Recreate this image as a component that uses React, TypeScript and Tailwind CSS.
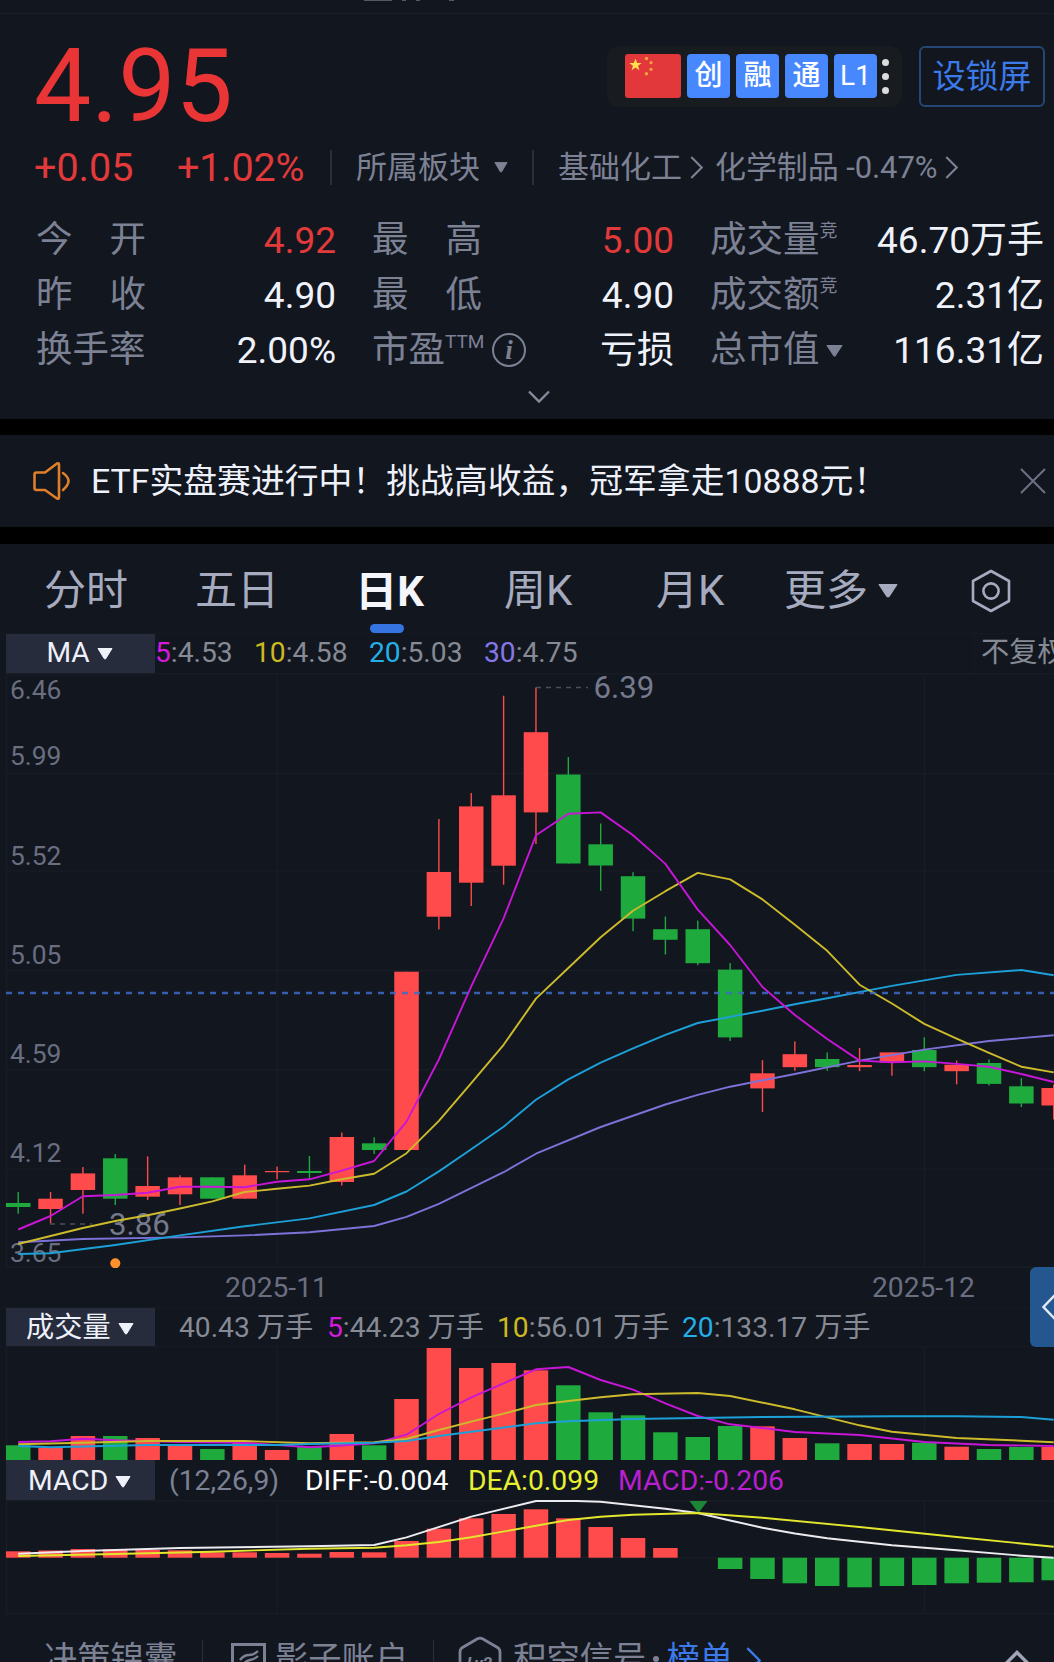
import React from 'react';

const RED = '#ff4b4b';
const GREEN = '#1eaa3c';
const STEP = 32.36;
const BAR = 24.5;

const cx = (i: number) => 18.2 + i * STEP;

// [up, body top, body bottom, high, low]
const candles: [number, number, number, number, number][] = [
  [0, 1203, 1207, 1192, 1213.7],
  [1, 1198.7, 1209, 1192, 1223.6],
  [1, 1173.4, 1190, 1167, 1213.7],
  [0, 1158.3, 1198.7, 1154, 1205],
  [1, 1186, 1196.7, 1156.4, 1199.9],
  [1, 1177.3, 1194.3, 1175.3, 1205],
  [0, 1177.3, 1198.7, 1177.3, 1198.7],
  [1, 1175.3, 1198.7, 1164.7, 1198.7],
  [1, 1171, 1172.2, 1166.6, 1179.3],
  [0, 1171, 1173, 1156, 1178.5],
  [1, 1137, 1182, 1132.6, 1185.6],
  [0, 1143.3, 1150, 1137.4, 1154],
  [1, 971.7, 1150, 971.7, 1150],
  [1, 872, 916.7, 819, 929.4],
  [1, 806.4, 882.7, 793, 906],
  [1, 795.3, 865.7, 695.7, 884.7],
  [1, 732.2, 812.4, 687.5, 844],
  [0, 774.5, 863.5, 757, 863.5],
  [0, 844.3, 865.5, 823.5, 890.8],
  [0, 876.2, 918.6, 872.2, 931.2],
  [0, 929.2, 939.8, 916.5, 954.5],
  [0, 929.2, 963.2, 920.6, 965.2],
  [0, 969.6, 1037.4, 963, 1041],
  [1, 1073.3, 1088.4, 1060.2, 1112],
  [1, 1054.2, 1067.2, 1041.4, 1070.8],
  [0, 1059, 1067.2, 1052.4, 1070.8],
  [1, 1065, 1067.2, 1048, 1071.2],
  [1, 1052.4, 1062.6, 1052.4, 1075.7],
  [0, 1050, 1067.2, 1037.3, 1071.2],
  [1, 1064.7, 1071.2, 1060.6, 1084.3],
  [0, 1063, 1083.9, 1059.4, 1085.5],
  [0, 1086.3, 1103.5, 1078.2, 1107.1],
  [1, 1088, 1105.5, 1084.7, 1119.4],
];

type Point = [number, number];

const ma5: Point[] = [
  [0, 1229.5], [1, 1216], [2, 1196.3], [3, 1195], [4, 1192.7], [5, 1186.8], [6, 1186.8], [7, 1187.2], [8, 1181.7],
  [9, 1179.3], [10, 1170.6], [11, 1161], [12, 1121.6], [13, 1059.5], [14, 986.3], [15, 918.3], [16, 835.3], [17, 813.7],
  [18, 812.4], [19, 835.3], [20, 863.9], [21, 909.6], [22, 945], [23, 987], [24, 1015], [25, 1039], [26, 1060.6],
  [27, 1062.2], [28, 1061.4], [29, 1063.9], [30, 1066.7], [31, 1074], [32, 1082],
];
const ma10: Point[] = [
  [0, 1244], [1, 1236], [2, 1228], [3, 1221], [4, 1215.3], [5, 1208.5], [6, 1201.4], [7, 1192], [8, 1188.8],
  [9, 1185.6], [10, 1179.3], [11, 1173.8], [12, 1153.2], [13, 1120.8], [14, 1083.2], [15, 1044.8], [16, 998.6], [17, 968],
  [18, 937.3], [19, 910.8], [20, 891.2], [21, 872.9], [22, 879.4], [23, 899.4], [24, 924.7], [25, 950.8], [26, 984.7],
  [27, 1003.5], [28, 1023.9], [29, 1038.6], [30, 1052.9], [31, 1066.7], [32, 1072.4],
];
const ma20: Point[] = [
  [0, 1254], [1, 1253.2], [3, 1245], [5, 1235.4], [7, 1226.3], [9, 1218.4], [11, 1205], [12, 1191.5], [13, 1171.4],
  [14, 1149.2], [15, 1126.7], [16, 1099.8], [17, 1079.4], [18, 1062.7], [19, 1048.4], [20, 1034.9], [21, 1023],
  [23, 1010.8], [24, 1004.3], [25, 998.2], [27, 985.9], [29, 974.9], [31, 970], [32, 975.3],
];
const ma30: Point[] = [
  [0, 1242.2], [2, 1239], [5, 1237.4], [7, 1235.4], [9, 1232.3], [11, 1226], [12, 1216.9], [13, 1203.8], [15, 1172.2],
  [16, 1153.7], [18, 1127], [20, 1104.5], [21, 1094.9], [22, 1086.7], [24, 1074], [26, 1060.6], [28, 1049.6], [30, 1041],
  [32, 1035.3],
];

// [up, bar top]
const volumes: Point[] = [
  [0, 1445.3], [1, 1447.7], [1, 1436], [0, 1436], [1, 1438], [1, 1446], [0, 1449], [1, 1442.7], [1, 1450], [0, 1446.7],
  [1, 1434], [0, 1445.3], [1, 1399], [1, 1348], [1, 1368], [1, 1363], [1, 1370.3], [0, 1385.3], [0, 1412.3], [0, 1415.3],
  [0, 1432.3], [0, 1437], [0, 1426], [1, 1426.3], [1, 1438], [0, 1443.3], [1, 1444], [1, 1444], [0, 1442.7], [1, 1446.7],
  [0, 1449], [0, 1447], [1, 1447],
];
const vol5: Point[] = [
  [0, 1442], [1, 1441.3], [2, 1438.7], [3, 1440.3], [5, 1442], [7, 1442.7], [9, 1447.3], [10, 1445.5], [11, 1443.3],
  [12, 1434.7], [13, 1414], [14, 1397.3], [15, 1383.3], [16, 1369.3], [17, 1367], [18, 1380], [19, 1389.7],
  [20, 1403.3], [21, 1416], [22, 1424.3], [23, 1428], [24, 1432], [26, 1435], [28, 1442], [30, 1445], [32, 1446],
];
const vol10: Point[] = [
  [0, 1444.3], [2, 1442.7], [4, 1441], [7, 1441], [9, 1443.3], [11, 1442.3], [12, 1439], [13, 1430], [14, 1421.7],
  [15, 1413.7], [16, 1405], [17, 1401], [18, 1397.3], [19, 1394.3], [21, 1393], [22, 1396], [24, 1409.3], [25, 1417.3],
  [26, 1425.3], [27, 1431.7], [29, 1438], [31, 1440.7], [32, 1442.3],
];
const vol20: Point[] = [
  [0, 1446], [1, 1447.3], [4, 1445], [8, 1445], [9, 1444], [11, 1442.7], [12, 1441], [13, 1436], [14, 1431.7],
  [16, 1423.3], [17, 1421.3], [19, 1419], [23, 1417], [27, 1416.3], [29, 1416.3], [31, 1417], [32, 1419.7],
];

const MACD_ZERO = 1557.7;
const macdEnds = [
  1551.3, 1550.5, 1549, 1549.3, 1550, 1550.3, 1552.3, 1552.3, 1553, 1553.7, 1552, 1552.3, 1541, 1528.7, 1518.3, 1514,
  1509.3, 1518.3, 1527, 1538, 1548, 1557.7, 1569, 1579, 1583.3, 1586, 1587.3, 1586, 1585, 1583.3, 1582.7, 1582.3, 1580.3,
];
const diff: Point[] = [
  [0, 1553.7], [2, 1551], [5, 1548], [9, 1546.3], [11, 1545], [12, 1537.3], [14, 1516.7], [16, 1501], [17, 1500.7],
  [18, 1501.7], [20, 1508.7], [21, 1513], [22, 1520.5], [23, 1527.7], [24, 1533.5], [25, 1538.3], [27, 1545.3],
  [29, 1550.3], [31, 1555.7], [32, 1557.7],
];
const dea: Point[] = [
  [0, 1556], [3, 1554], [6, 1551.7], [9, 1548.7], [11, 1547.7], [12, 1545.3], [13, 1542], [14, 1537.3], [16, 1525.7],
  [17, 1520], [18, 1516.7], [19, 1514.7], [21, 1513], [23, 1517.7], [26, 1527], [29, 1537], [32, 1546.7],
];

const axisLabels: [string, number][] = [
  ['6.46', 698.5], ['5.99', 765], ['5.52', 864.5], ['5.05', 963.5], ['4.59', 1062.5], ['4.12', 1161.5], ['3.65', 1261.5],
];

const Line: React.FC<{ points: Point[]; color: string }> = ({ points, color }) => (
  <polyline points={points.map(([i, y]) => `${cx(i)},${y}`).join(' ')} fill="none" stroke={color} strokeWidth="1.9" strokeLinejoin="round" />
);

const Caret: React.FC<{ className: string }> = ({ className }) => (
  <svg viewBox="0 0 16 12" preserveAspectRatio="none" className={`shrink-0 ${className}`}>
    <path d="M1 0.5H15L8.8 10.6Q8 11.6 7.2 10.6Z" fill="currentColor" stroke="currentColor" strokeLinejoin="round" />
  </svg>
);

const Arrow: React.FC<{ className: string }> = ({ className }) => (
  <svg viewBox="0 0 12 22" className={`shrink-0 ${className}`} fill="none" stroke="currentColor" strokeWidth="2">
    <path d="M1 1L11 11L1 21" />
  </svg>
);

const Panel: React.FC<{ children: React.ReactNode; className?: string }> = ({ children, className }) => (
  <div className={`ml-1.5 flex h-full w-[149px] shrink-0 items-center bg-[#272c3d] text-[#eef1fa] ${className}`}>{children}</div>
);

const Stat: React.FC<{ label: React.ReactNode; value: string; red?: boolean }> = ({ label, value, red }) => (
  <div className="flex h-[55px] items-center justify-between">
    <div className="flex items-center text-[36.5px] text-[#7c8194]">{label}</div>
    <span className={red ? 'text-[#e23a3a]' : 'text-[#f0f2fa]'}>{value}</span>
  </div>
);

const Spread: React.FC<{ a: string; b: string }> = ({ a, b }) => (
  <span className="flex w-[110px] justify-between"><span>{a}</span><span>{b}</span></span>
);

const Sup: React.FC<{ children: React.ReactNode; className?: string }> = ({ children, className }) => (
  <span className={`self-start leading-none ${className}`}>{children}</span>
);

const Quote = () => (
  <section className="h-[405px]">
    <div className="flex h-[124px] items-center justify-between pl-[34px] pr-[9px]">
      <span className="pt-[20px] text-[102px] leading-none text-[#e93535]">4.95</span>
      <div className="flex items-center gap-[17px]">
        <div className="flex h-[61px] w-[295px] items-center gap-[6px] rounded-xl bg-[#181b20] pl-[18px]">
          <svg viewBox="0 0 56 44" className="h-[44px] w-[56px]">
            <rect width="56" height="44" rx="3" fill="#e2373b" />
            <path d="M10.5 4.5l1.6 4.4 4.6.1-3.7 2.8 1.4 4.5-3.9-2.7-3.9 2.7 1.4-4.5-3.7-2.8 4.6-.1z" fill="#ffe14d" />
            <g fill="#f5a33c">
              <circle cx="21.5" cy="4.5" r="1.7" />
              <circle cx="26" cy="8.7" r="1.6" />
              <circle cx="26" cy="15.3" r="1.6" />
              <circle cx="21.5" cy="19.7" r="1.7" />
            </g>
          </svg>
          {['创', '融', '通'].map(tag => (
            <span key={tag} className="flex h-[44px] w-[43px] items-center justify-center rounded bg-[#4788ff] text-[28px] font-medium leading-none text-white">{tag}</span>
          ))}
          <span className="flex h-[44px] w-[43px] items-center justify-center rounded bg-[#4788ff] text-[28px] leading-none text-white">L1</span>
          <div className="-ml-px flex flex-col gap-[7px]">
            <i className="size-[7px] rounded-full bg-[#dcdcdc]" />
            <i className="size-[7px] rounded-full bg-[#dcdcdc]" />
            <i className="size-[7px] rounded-full bg-[#dcdcdc]" />
          </div>
        </div>
        <button className="h-[61px] w-[126px] rounded-md border-2 border-[#264674] text-[33px] leading-none text-[#3b7ae8]">设锁屏</button>
      </div>
    </div>

    <div className="flex h-[59px] items-center text-[31px] leading-none text-[#7c8194]">
      <span className="w-[142px] pl-[34px] text-[39.5px] text-[#e23a3a]">+0.05</span>
      <span className="ml-[35px] w-[153px] text-[39.5px] tracking-[-0.2px] text-[#e23a3a]">+1.02%</span>
      <i className="h-[35px] w-[2px] bg-[#2a2e3a]" />
      <span className="ml-[24px]">所属板块</span>
      <Caret className="ml-[14px] h-[11px] w-[14px]" />
      <i className="ml-[24px] h-[35px] w-[2px] bg-[#2a2e3a]" />
      <span className="ml-[24px]">基础化工</span>
      <Arrow className="ml-[8px] h-[23px] w-[13px]" />
      <span className="ml-[12px] tracking-[-0.1px]">化学制品 -0.47%</span>
      <Arrow className="ml-[8px] h-[23px] w-[13px]" />
    </div>

    <div className="grid grid-cols-[300px_302px_334px] gap-x-[36px] pl-[36px] pt-[16px] text-[37px] leading-none">
      <Stat label={<Spread a="今" b="开" />} value="4.92" red />
      <Stat label={<Spread a="最" b="高" />} value="5.00" red />
      <Stat label={<>成交量<Sup className="text-[18px]">竞</Sup></>} value="46.70万手" />
      <Stat label={<Spread a="昨" b="收" />} value="4.90" />
      <Stat label={<Spread a="最" b="低" />} value="4.90" />
      <Stat label={<>成交额<Sup className="text-[18px]">竞</Sup></>} value="2.31亿" />
      <Stat label="换手率" value="2.00%" />
      <Stat
        label={
          <>
            市盈<Sup className="text-[19px]">TTM</Sup>
            <svg viewBox="0 0 36 36" className="ml-[7px] size-[36px]">
              <circle cx="18" cy="17" r="16" fill="none" stroke="#7c8194" strokeWidth="2" />
              <text x="18" y="26" textAnchor="middle" fontSize="27" fontStyle="italic" fontWeight="bold" fill="#7c8194" className="font-['Liberation_Serif',serif]">i</text>
            </svg>
          </>
        }
        value="亏损"
      />
      <Stat label={<>总市值<Caret className="ml-[6px] h-[12px] w-[17px]" /></>} value="116.31亿" />
    </div>
    <div className="flex justify-center pl-[24px] pt-[12px] text-[#858a9b]">
      <svg viewBox="0 0 22 14" className="h-[14px] w-[22px]" fill="none" stroke="currentColor" strokeWidth="2.4">
        <path d="M1 1.5L11 11.5L21 1.5" />
      </svg>
    </div>
  </section>
);

const Banner = () => (
  <section className="flex h-[92px] items-center bg-[#12161f] pl-[33px] pr-[8px]">
    <svg viewBox="0 0 38 40" className="h-[40px] w-[38px] shrink-0" fill="none" stroke="#df7f2a" strokeWidth="2.6" strokeLinejoin="round" strokeLinecap="round">
      <path d="M3.5 11.5H12L24 2.5Q26 1.5 26 4V36Q26 38.5 24 37.5L12 29H3.5Q1.5 29 1.5 27V13.5Q1.5 11.5 3.5 11.5Z" />
      <path d="M30 12Q35.5 16 35.5 20T30 29" />
    </svg>
    <span className="ml-[20px] whitespace-nowrap pt-px text-[33.85px] leading-none text-[#eef1fa]">ETF实盘赛进行中！挑战高收益，冠军拿走10888元！</span>
    <svg viewBox="0 0 26 26" className="ml-auto size-[26px] shrink-0" stroke="#6d7284" strokeWidth="2">
      <path d="M1 1L25 25M25 1L1 25" />
    </svg>
  </section>
);

const Tabs = () => (
  <nav className="flex h-[89px] items-center pt-[4px] text-[42px] leading-none text-[#a6abbf]">
    <span className="w-[151px] pl-[44px]">分时</span>
    <span className="w-[162px] pl-[44px]">五日</span>
    <span className="flex w-[150px] flex-col items-center self-end pl-[3px]">
      <span className="font-bold text-[#f4f6fc]">日K</span>
      <i className="mt-[11px] mr-[5px] h-[9px] w-[34px] rounded-full bg-[#3674e2]" />
    </span>
    <span className="w-[152px] pl-[41px]">周K</span>
    <span className="w-[169px] pl-[41px]">月K</span>
    <span>更多</span>
    <Caret className="ml-[10px] h-[14px] w-[20px]" />
    <svg viewBox="0 0 40 44" className="ml-[73px] h-[44px] w-[40px]" fill="none" stroke="currentColor" strokeWidth="2.6" strokeLinejoin="round">
      <path d="M20 2L38 12V32L20 42L2 32V12Z" />
      <circle cx="20" cy="22" r="7.6" />
    </svg>
  </nav>
);

const MaRow = () => (
  <div className="flex h-[40px] items-center border-t border-[#161a23] text-[28.2px] leading-none text-[#868a95]">
    <Panel className="justify-center gap-[7px] pr-[2px]">MA<Caret className="h-[12px] w-[16px]" /></Panel>
    <span className="w-[99px]"><b className="font-normal text-[#d31bdb]">5</b>:4.53</span>
    <span className="w-[115px]"><b className="font-normal text-[#cdb920]">10</b>:4.58</span>
    <span className="w-[115px]"><b className="font-normal text-[#25aee6]">20</b>:5.03</span>
    <span><b className="font-normal text-[#8676e6]">30</b>:4.75</span>
    <span className="ml-auto flex h-full w-[80px] shrink-0 items-center whitespace-nowrap border-l border-[#161a23] pl-[6px]">不复权</span>
  </div>
);

const KChart = () => (
  <svg viewBox="0 673 1054 595" className="block h-[595px] w-full">
    <g stroke="#171c25" strokeWidth="1.5">
      {[673.7, 773.6, 871, 970.5, 1069.8, 1169, 1267.3].map(y => <path key={y} d={`M6 ${y}H1054`} />)}
      <path d="M6.5 673V1268M277 673V1268M924.5 673V1268" />
    </g>
    <g fontSize="26.4" fill="#696e80">
      {axisLabels.map(([label, y]) => <text key={label} x="10" y={y}>{label}</text>)}
    </g>
    {candles.map(([up, top, bottom, high, low], i) => (
      <g key={i} fill={up ? RED : GREEN}>
        <rect x={cx(i) - 0.7} y={high} width="1.4" height={low - high} />
        <rect x={cx(i) - BAR / 2} y={top} width={BAR} height={bottom - top} />
      </g>
    ))}
    <g fontSize="31.2" fill="#757a8c">
      <text x="593.5" y="698">6.39</text>
      <text x="109" y="1235">3.86</text>
    </g>
    <path d="M536 687.5H588M50 1224H92" stroke="#4a4f5c" strokeWidth="1.6" strokeDasharray="5 5" />
    <Line points={ma30} color="#7d72d8" />
    <Line points={ma20} color="#1da0d8" />
    <Line points={ma10} color="#cdbb2c" />
    <Line points={ma5} color="#c816d8" />
    <path d="M6 993H1054" stroke="#3d6bc4" strokeOpacity="0.85" strokeWidth="2.4" strokeDasharray="6 6" />
    <circle cx="115.3" cy="1263.3" r="5" fill="#ff9329" />
  </svg>
);

const Dates = () => (
  <div className="flex h-[39px] items-center pt-[2px] text-[28.2px] leading-none text-[#696e80]">
    <span className="w-[648px] pl-[225px]">2025-11</span>
    <span className="pl-[224px]">2025-12</span>
  </div>
);

const VolumeRow = () => (
  <div className="flex h-[40px] items-center border-y border-[#161a23] text-[28.2px] leading-none text-[#868a95]">
    <Panel className="gap-[7px] pl-[20px] pt-[3px]">成交量<Caret className="h-[12px] w-[16px]" /></Panel>
    <span className="w-[172px] pl-[24px] pt-[3px]">40.43 万手</span>
    <span className="w-[170px] pt-[3px]"><b className="font-normal text-[#d31bdb]">5</b>:44.23 万手</span>
    <span className="w-[185px] pt-[3px]"><b className="font-normal text-[#cdb920]">10</b>:56.01 万手</span>
    <span className="pt-[3px]"><b className="font-normal text-[#25aee6]">20</b>:133.17 万手</span>
  </div>
);

const VolumeChart = () => (
  <svg viewBox="0 1347 1054 113" className="block h-[113px] w-full">
    <path d="M6.5 1347V1460M277 1347V1460M924.5 1347V1460" stroke="#171c25" strokeWidth="1.5" />
    {volumes.map(([up, top], i) => (
      <rect key={i} x={cx(i) - BAR / 2} y={top} width={BAR} height={1460 - top} fill={up ? RED : GREEN} />
    ))}
    <Line points={vol5} color="#c816d8" />
    <Line points={vol10} color="#cdbb2c" />
    <Line points={vol20} color="#1da0d8" />
  </svg>
);

const MacdRow = () => (
  <div className="flex h-[40px] items-center text-[28.3px] leading-none">
    <Panel className="gap-[7px] pl-[22px] pt-[3px]">MACD<Caret className="h-[12px] w-[16px]" /></Panel>
    <span className="w-[150px] pl-[14px] pt-[3px] text-[#7c8194]">(12,26,9)</span>
    <span className="w-[163px] pt-[3px] text-white">DIFF:-0.004</span>
    <span className="w-[150px] pt-[3px] text-[#e6f032]">DEA:0.099</span>
    <span className="pt-[3px] text-[#b81fd0]">MACD:-0.206</span>
  </div>
);

const MacdChart = () => (
  <svg viewBox="0 1500 1054 116" className="block h-[116px] w-full">
    <path d="M6.5 1500V1614M277 1500V1614M924.5 1500V1614M6 1500.7H1054M6 1557.7H1054M6 1613.5H1054" stroke="#171c25" strokeWidth="1.5" />
    {macdEnds.map((y, i) => (
      <rect
        key={i}
        x={cx(i) - BAR / 2}
        y={Math.min(y, MACD_ZERO)}
        width={BAR}
        height={Math.abs(y - MACD_ZERO)}
        fill={y < MACD_ZERO ? RED : GREEN}
      />
    ))}
    <path d="M689.5 1501H707.5L698.5 1513Z" fill="#1d8636" />
    <Line points={diff} color="#ececf0" />
    <Line points={dea} color="#e3e62c" />
  </svg>
);

const BottomBar = () => (
  <footer className="flex h-[46px] items-start overflow-hidden pt-[26px] text-[33.3px] leading-none text-[#7c8194]">
    <span className="w-[157px] shrink-0 whitespace-nowrap pl-[44px]">决策锦囊</span>
    <i className="-mt-[2px] ml-[45px] h-[40px] w-px shrink-0 bg-[#2a2e3a]" />
    <svg viewBox="0 0 36 36" className="ml-[28px] mt-[1px] size-[36px] shrink-0" fill="none" stroke="currentColor" strokeWidth="3">
      <rect x="1.5" y="1.5" width="32" height="32" />
      <path d="M9 17Q13 12 18 12T27 8M9 25Q14 18 19 17T27 13" strokeWidth="2.4" />
    </svg>
    <span className="ml-[8px] shrink-0">影子账户</span>
    <i className="-mt-[2px] ml-[25px] h-[40px] w-px shrink-0 bg-[#2a2e3a]" />
    <svg viewBox="0 0 44 48" className="-mt-[6px] ml-[24px] h-[48px] w-[44px] shrink-0" fill="none" stroke="currentColor" strokeWidth="2.8" strokeLinejoin="round">
      <path d="M19.5 2.8Q22 1.4 24.5 2.8L39.5 11.5Q42 13 42 16V32L22 46L2 32V16Q2 13 4.5 11.5Z" />
      <text x="21.5" y="33" textAnchor="middle" fontSize="17" fontWeight="bold" fontStyle="italic" fill="currentColor" stroke="none">Lv2</text>
    </svg>
    <span className="ml-[11px] shrink-0">积空信号</span>
    <span className="flex w-[20px] shrink-0 justify-center pt-[14px]"><i className="size-[6px] rounded-full bg-[#7c8194]" /></span>
    <span className="shrink-0 text-[#3b7ae8]">榜单</span>
    <Arrow className="ml-[13px] mt-[5px] h-[27px] w-[15px] text-[#3b7ae8]" />
    <svg viewBox="0 0 24 14" className="ml-auto mr-[25px] mt-[8px] h-[14px] w-[24px] shrink-0" fill="none" stroke="#a0a5b5" strokeWidth="3.4">
      <path d="M1.5 13L12 2.5L22.5 13" />
    </svg>
  </footer>
);

const App: React.FC = () => (
  <main className="relative h-[1662px] w-[1054px] overflow-hidden bg-[#12161f] font-['Roboto','Noto_Sans_CJK_SC',sans-serif]">
    <header className="flex h-[14px] gap-[10px] border-b border-[#1a1e27] pl-[364px]">
      <i className="h-px w-[28px] bg-[#555963]" />
      <i className="h-px w-[4px] bg-[#555963]" />
      <i className="h-px w-[4px] bg-[#555963]" />
      <i className="ml-[19px] h-px w-[5px] bg-[#555963]" />
    </header>
    <Quote />
    <div className="h-[16px] bg-black" />
    <Banner />
    <div className="h-[17px] bg-black" />
    <Tabs />
    <MaRow />
    <KChart />
    <Dates />
    <VolumeRow />
    <VolumeChart />
    <MacdRow />
    <MacdChart />
    <BottomBar />
    <button className="absolute -right-2 top-[1267px] flex h-[80px] w-[32px] items-center rounded-l-md bg-[#24568f] pl-[12px]">
      <svg viewBox="0 0 14 26" className="h-[26px] w-[14px]" fill="none" stroke="#e2eaf6" strokeWidth="2.4">
        <path d="M13 1L1.5 13L13 25" />
      </svg>
    </button>
  </main>
);

export default App;
